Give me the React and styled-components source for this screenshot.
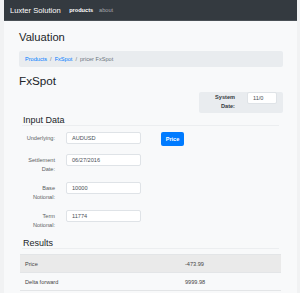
import React from "react";
import styled, { createGlobalStyle } from "styled-components";

const Global = createGlobalStyle`
  html, body { margin: 0; padding: 0; }
  body {
    background: #f1f2f3;
    font-family: "Liberation Sans", Arial, sans-serif;
    color: #212529;
  }
`;

const Page = styled.div`
  margin: 0 3px 0 4px;
  background: #f8f9fa;
  min-height: 293px;
`;

const Navbar = styled.nav`
  height: 21px;
  background: #343a40;
  border-bottom: 1px solid #4a5056;
  box-sizing: border-box;
  display: flex;
  align-items: center;
  padding-left: 6px;
`;

const Brand = styled.span`
  color: #fff;
  font-size: 7.6px;
  margin-right: 8.5px;
`;

const NavLink = styled.span`
  color: ${(p) => (p.$active ? "#fff" : "rgba(255,255,255,0.55)")};
  font-weight: ${(p) => (p.$active ? 700 : 400)};
  font-size: 5.6px;
  margin-right: 6px;
`;

const Container = styled.main`
  padding: 0 14px 0 15px;
`;

const Title = styled.h2`
  margin: 0;
  padding-top: 8.5px;
  font-size: 11.2px;
  line-height: 14px;
  font-weight: 400;
  color: #212529;
`;

const Crumbs = styled.ol`
  list-style: none;
  margin: 7.5px 0 0;
  height: 16px;
  padding: 0 6px;
  background: #e9ecef;
  border-radius: 2px;
  display: flex;
  align-items: center;
  font-size: 5.6px;
`;

const Crumb = styled.li`
  color: ${(p) => (p.$link ? "#007bff" : "#6c757d")};
  &:not(:first-child)::before {
    content: "/";
    color: #6c757d;
    padding: 0 3px;
  }
`;

const SubTitle = styled.h3`
  margin: 7px 0 0;
  font-size: 11.7px;
  line-height: 14px;
  font-weight: 400;
`;

const SysRow = styled.div`
  display: flex;
  justify-content: flex-end;
  margin-top: 4px;
`;

const SysBox = styled.div`
  width: 84px;
  height: 21px;
  background: #e9ecef;
  border-radius: 2px;
  display: flex;
  justify-content: flex-end;
  padding-right: 6px;
  box-sizing: border-box;
`;

const SysLabel = styled.div`
  font-size: 5.6px;
  font-weight: 700;
  line-height: 9px;
  padding-top: 1.2px;
  text-align: right;
  color: #343a40;
  margin-right: 12px;
`;

const Input = styled.div`
  width: ${(p) => p.$w || 75}px;
  height: 12px;
  box-sizing: border-box;
  background: #fff;
  border: 1px solid #dfe3e7;
  border-radius: 2px;
  font-size: 5.6px;
  color: #495057;
  padding-left: ${(p) => p.$pl || 5}px;
  display: flex;
  align-items: ${(p) => (p.$top ? "flex-start" : "center")};
  padding-top: ${(p) => (p.$top ? 2 : 0)}px;
`;

const Fieldset = styled.section`
  margin: 0 4px 0 3px;
`;

const Legend = styled.h4`
  margin: ${(p) => p.$mt}px 0 0;
  padding-left: 1px;
  font-size: 9px;
  line-height: 10px;
  font-weight: 400;
  color: #212529;
  border-bottom: 1.5px solid #eceef0;
`;

const Form = styled.div`
  padding-top: 6px;
`;

const Row = styled.div`
  display: flex;
  align-items: flex-start;
  margin-bottom: 8px;
`;

const Label = styled.div`
  width: 33px;
  text-align: right;
  font-size: 5.6px;
  line-height: 9px;
  padding-top: 2px;
  color: #5b5f63;
  margin-right: 11px;
`;

const Button = styled.button`
  margin-left: 20px;
  width: 23px;
  height: 14px;
  border: none;
  border-radius: 2px;
  background: #007bff;
  color: #fff;
  font-family: inherit;
  font-weight: 700;
  font-size: 5.6px;
  padding: 0;
`;

const Table = styled.table`
  margin: 5px -2px 0 -2px;
  width: calc(100% + 4px);
  border-collapse: collapse;
  font-size: 5.6px;
  color: #444;
`;

const Tr = styled.tr`
  background: ${(p) => (p.$odd ? "#eaeaea" : "transparent")};
`;

const Td = styled.td`
  height: 17px;
  padding: 0 0 0 ${(p) => p.$pl}px;
  border-top: 1px solid #e3e5e7;
  border-bottom: 1px solid #e3e5e7;
  width: ${(p) => p.$w || "auto"};
`;

export default function App() {
  return (
    <>
      <Global />
      <Page>
        <Navbar>
          <Brand>Luxter Solution</Brand>
          <NavLink $active>products</NavLink>
          <NavLink>about</NavLink>
        </Navbar>
        <Container>
          <Title>Valuation</Title>
          <Crumbs>
            <Crumb $link>Products</Crumb>
            <Crumb $link>FxSpot</Crumb>
            <Crumb>pricer FxSpot</Crumb>
          </Crumbs>
          <SubTitle>FxSpot</SubTitle>
          <SysRow>
            <SysBox>
              <SysLabel>
                System
                <br />
                Date:
              </SysLabel>
              <Input $w={30} $top $pl={5}>11/0</Input>
            </SysBox>
          </SysRow>
          <Fieldset>
            <Legend $mt={2}>Input Data</Legend>
            <Form>
              <Row>
                <Label>Underlying:</Label>
                <Input>AUDUSD</Input>
                <Button>Price</Button>
              </Row>
              <Row>
                <Label>
                  Settlement
                  <br />
                  Date:
                </Label>
                <Input>06/27/2016</Input>
              </Row>
              <Row>
                <Label>
                  Base
                  <br />
                  Notional:
                </Label>
                <Input>10000</Input>
              </Row>
              <Row>
                <Label>
                  Term
                  <br />
                  Notional:
                </Label>
                <Input>11774</Input>
              </Row>
            </Form>
            <Legend $mt={5}>Results</Legend>
            <Table>
              <tbody>
                <Tr $odd>
                  <Td $pl={5} $w="160px">Price</Td>
                  <Td $pl={0}>-473.99</Td>
                </Tr>
                <Tr>
                  <Td $pl={5} $w="160px">Delta forward</Td>
                  <Td $pl={0}>9999.98</Td>
                </Tr>
              </tbody>
            </Table>
          </Fieldset>
        </Container>
      </Page>
    </>
  );
}
